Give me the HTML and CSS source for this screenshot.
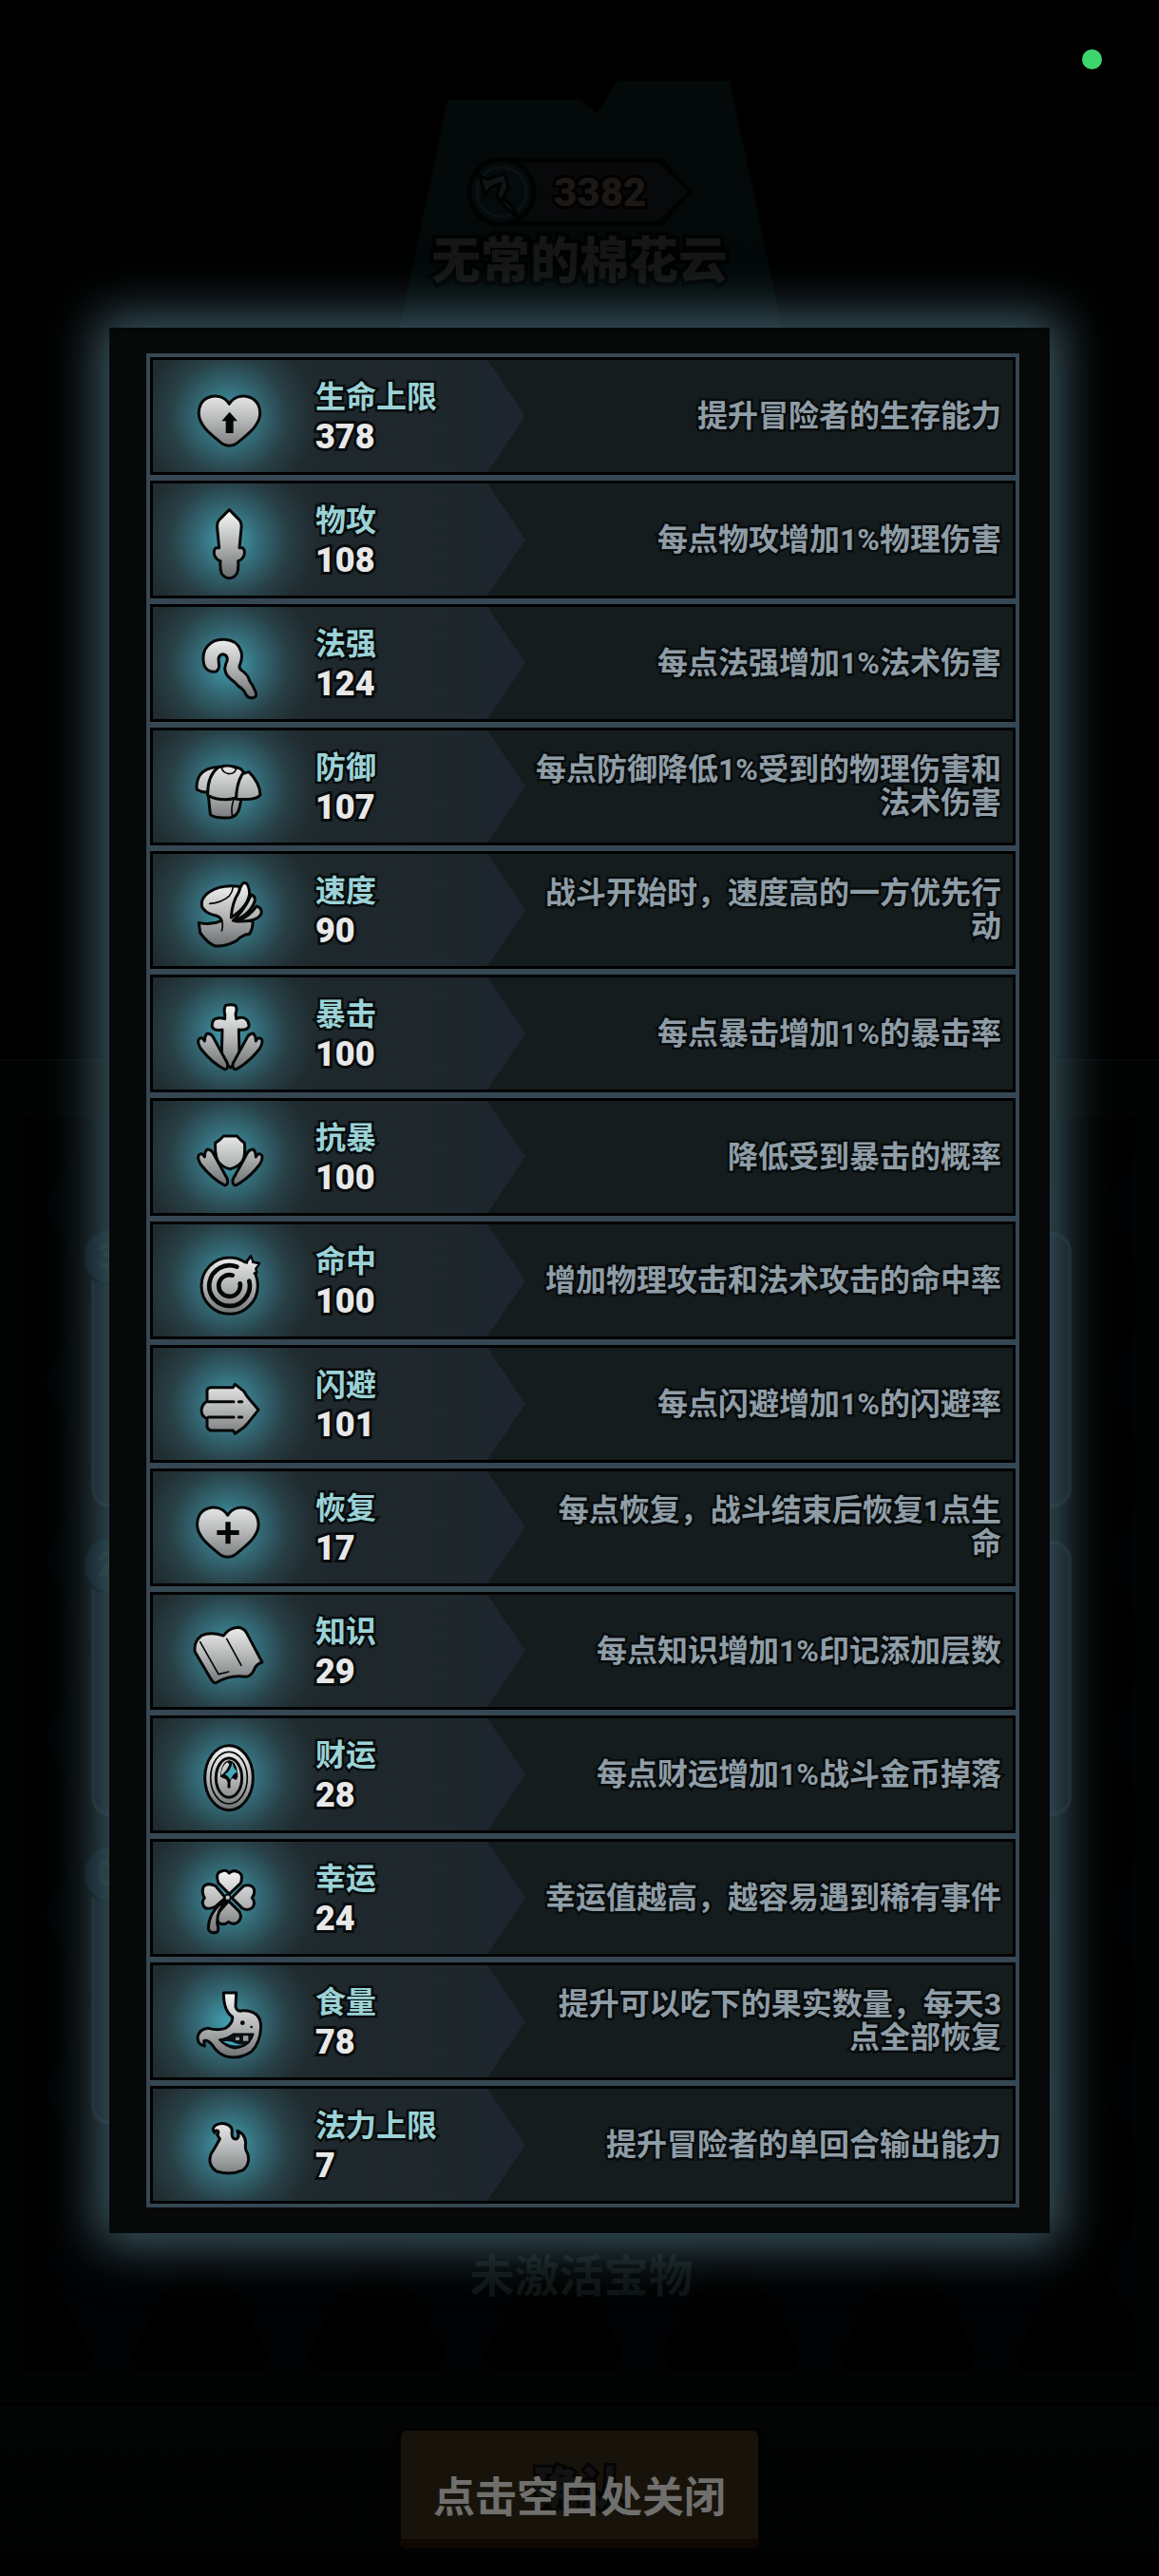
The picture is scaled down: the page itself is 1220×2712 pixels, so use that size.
FILE: index.html
```html
<!DOCTYPE html>
<html lang="zh-CN">
<head>
    <meta charset="UTF-8">
    <meta name="viewport" content="width=device-width, initial-scale=1.0">
    <title>冒险者属性</title>
    <link rel="stylesheet" href="styles.css">
</head>
<body>
    <!-- 图标公用的渐变和形状 -->
    <svg class="defs" width="0" height="0" aria-hidden="true">
        <defs>
            <linearGradient id="metal" gradientUnits="userSpaceOnUse" x1="0" y1="50" x2="0" y2="245">
                <stop offset="0" stop-color="#f2f2f2"/>
                <stop offset="0.5" stop-color="#b4b6b7"/>
                <stop offset="1" stop-color="#6e7072"/>
            </linearGradient>
            <path id="heart" d="M136 94C120 68 92 66 74 72C48 80 38 104 40 128C43 160 68 182 112 218Q136 234 160 218C204 182 230 160 233 128C235 104 224 80 198 72C180 66 152 68 136 94Z"/>
            <path id="leaf" d="M40 150Q48 142 54 150L58 156Q58 140 66 132Q78 132 84 142L130 226Q134 244 122 246Q80 224 46 180Q34 160 40 150Z"/>
        </defs>
    </svg>

    <div class="screen">
        <div class="scene">
            <header class="hero">
                <div class="beam"></div>
                <div class="power">
                    <svg class="power-icon" viewBox="0 0 74 74">
                        <circle cx="37" cy="37" r="34" fill="#050a0b" stroke="#010202" stroke-width="5"/>
                        <circle cx="37" cy="37" r="26" fill="none" stroke="#0b1213" stroke-width="3"/>
                        <path d="M14 20L22 24L40 18L44 32L38 44L46 50L56 66L40 52L32 40L36 28L26 32L20 40Z" fill="#101617" stroke="#010202" stroke-width="3"/>
                    </svg>
                    <span class="power-value">3382</span>
                </div>
                <h1 class="title">无常的棉花云</h1>
            </header>
            <main class="team">
                <div class="board">
                    <div class="cards">
                        <div class="card"><span class="tag">3</span></div>
                        <div class="card"></div>
                        <div class="card"><span class="tag">2</span></div>
                        <div class="card"></div>
                        <div class="card"><span class="tag">0</span></div>
                    </div>
                    <h2 class="relic">未激活宝物</h2>
                </div>
            </main>
            <footer class="footer">
                <button class="confirm" type="button">确认</button>
            </footer>
        </div>

        <div class="modal">
            <div class="status-dot"></div>
            <section class="panel">
                <ul class="stats">
                    <li class="stat">
                        <div class="stat-main">
                            <svg class="icon" viewBox="0 0 270 270">
                                <use href="#heart"/>
                                <path class="ink" d="M137 119L162 148H149V186H125V148H112Z"/>
                            </svg>
                            <div><div class="stat-name">生命上限</div><div class="stat-value">378</div></div>
                        </div>
                        <p class="stat-desc">提升冒险者的生存能力</p>
                    </li>
                    <li class="stat">
                        <div class="stat-main">
                            <svg class="icon" viewBox="0 0 270 270">
                                <path d="M136 38L168 70Q176 80 174 96L168 158L178 158Q188 166 182 184Q176 196 164 200Q166 226 160 240Q150 254 136 254Q122 254 112 240Q106 226 108 200Q96 196 90 184Q84 166 94 158L104 158L98 96Q96 80 104 70Z"/>
                            </svg>
                            <div><div class="stat-name">物攻</div><div class="stat-value">108</div></div>
                        </div>
                        <p class="stat-desc">每点物攻增加1%物理伤害</p>
                    </li>
                    <li class="stat">
                        <div class="stat-main">
                            <svg class="icon" viewBox="0 0 270 270">
                                <path d="M86 160Q62 158 56 136Q48 100 68 78Q90 54 122 58Q160 60 172 92Q180 112 170 136Q164 148 176 156Q196 170 200 188Q214 208 220 226Q224 240 210 242Q196 244 188 230Q180 214 166 206Q154 192 140 182Q124 170 122 150Q124 136 130 122Q130 106 116 104Q102 106 102 122L104 142Q102 160 86 160Z"/>
                            </svg>
                            <div><div class="stat-name">法强</div><div class="stat-value">124</div></div>
                        </div>
                        <p class="stat-desc">每点法强增加1%法术伤害</p>
                    </li>
                    <li class="stat">
                        <div class="stat-main">
                            <svg class="icon" viewBox="0 0 270 270">
                                <path d="M104 70Q60 72 42 98Q30 122 34 142Q50 152 70 150Q72 100 104 70Z"/>
                                <path d="M70 160L76 220Q90 234 140 230Q162 226 168 200L174 172Z"/>
                                <path class="thin" d="M150 174Q140 200 146 228"/>
                                <path d="M100 72Q130 60 172 76L182 88Q160 120 158 168Q110 182 68 160Q66 100 100 72Z"/>
                                <path d="M178 92L198 86Q232 120 234 158Q224 176 158 172Q158 124 178 92Z"/>
                                <path class="thin-fill" d="M112 72Q136 62 158 76Q154 92 134 92Q114 88 112 72Z"/>
                            </svg>
                            <div><div class="stat-name">防御</div><div class="stat-value">107</div></div>
                        </div>
                        <p class="stat-desc">每点防御降低1%受到的物理伤害和<br>法术伤害</p>
                    </li>
                    <li class="stat">
                        <div class="stat-main">
                            <svg class="icon" viewBox="0 0 270 270">
                                <path d="M168 58Q110 50 72 76Q44 96 50 122Q58 140 86 148Q108 152 112 166Q76 182 40 172L44 204Q70 240 92 246Q124 248 158 230Q176 210 200 208Q212 190 210 168L176 160Z"/>
                                <path class="thin" d="M74 112Q110 110 136 88Q146 76 148 60M112 166Q118 180 112 198"/>
                                <path d="M222 120Q242 126 236 146Q222 170 156 168Q196 156 222 120Z"/>
                                <path d="M206 84Q220 88 216 106Q200 150 148 166Q184 132 206 84Z"/>
                                <path d="M184 46Q198 48 200 80Q196 120 142 156Q144 110 166 76Q174 48 184 46Z"/>
                            </svg>
                            <div><div class="stat-name">速度</div><div class="stat-value">90</div></div>
                        </div>
                        <p class="stat-desc">战斗开始时，速度高的一方优先行<br>动</p>
                    </li>
                    <li class="stat">
                        <div class="stat-main">
                            <svg class="icon" viewBox="0 0 270 270">
                                <path d="M124 44Q140 38 156 44Q162 56 156 70L158 86Q176 78 188 86Q200 96 198 110Q192 124 166 120L168 196Q162 224 140 240Q118 224 112 196L114 120Q90 126 82 112Q80 92 92 86Q106 80 122 86L122 70Q118 56 124 44Z"/>
                                <use href="#leaf"/>
                                <use href="#leaf" transform="translate(278 0) scale(-1 1)"/>
                            </svg>
                            <div><div class="stat-name">暴击</div><div class="stat-value">100</div></div>
                        </div>
                        <p class="stat-desc">每点暴击增加1%的暴击率</p>
                    </li>
                    <li class="stat">
                        <div class="stat-main">
                            <svg class="icon" viewBox="0 0 270 270">
                                <use href="#leaf" transform="translate(0 -24)"/>
                                <use href="#leaf" transform="translate(278 -24) scale(-1 1)"/>
                                <path d="M118 66H160L172 78L184 88Q188 130 176 148Q160 166 139 170Q116 166 102 148Q90 130 92 88L106 78Z"/>
                            </svg>
                            <div><div class="stat-name">抗暴</div><div class="stat-value">100</div></div>
                        </div>
                        <p class="stat-desc">降低受到暴击的概率</p>
                    </li>
                    <li class="stat">
                        <div class="stat-main">
                            <svg class="icon" viewBox="0 0 270 270">
                                <path d="M204 56L210 74L230 78L220 94L222 108L190 112L172 92L190 74Z"/>
                                <circle cx="137" cy="149" r="89"/>
                                <path class="ring" d="M199 134A64 64 0 1 1 160 89"/>
                                <path class="ring" d="M170 142A34 34 0 1 1 146 116"/>
                                <path class="flat" d="M204 62L208 78L226 82L216 94L218 104L190 120L160 124L166 98L180 90L178 78L194 80Z"/>
                            </svg>
                            <div><div class="stat-name">命中</div><div class="stat-value">100</div></div>
                        </div>
                        <p class="stat-desc">增加物理攻击和法术攻击的命中率</p>
                    </li>
                    <li class="stat">
                        <div class="stat-main">
                            <svg class="icon" viewBox="0 0 270 270">
                                <path d="M76 80H148L154 70L182 92L192 108L228 151L192 196L180 208L154 226L148 216H78Q64 212 66 196V178Q48 172 48 152Q50 132 66 124V96Q64 82 76 80Z"/>
                                <path class="line" d="M70 125H150M166 125H176M70 174H150M166 174H176"/>
                            </svg>
                            <div><div class="stat-name">闪避</div><div class="stat-value">101</div></div>
                        </div>
                        <p class="stat-desc">每点闪避增加1%的闪避率</p>
                    </li>
                    <li class="stat">
                        <div class="stat-main">
                            <svg class="icon" viewBox="0 0 270 270">
                                <use href="#heart" transform="translate(-5 0)"/>
                                <path class="ink" d="M124 115H140V141H167V156H140V184H124V156H97V141H124Z"/>
                            </svg>
                            <div><div class="stat-name">恢复</div><div class="stat-value">17</div></div>
                        </div>
                        <p class="stat-desc">每点恢复，战斗结束后恢复1点生<br>命</p>
                    </li>
                    <li class="stat">
                        <div class="stat-main">
                            <svg class="icon" viewBox="0 0 270 270">
                                <path d="M48 84Q76 70 118 84Q134 60 164 58Q182 60 190 74L240 168Q222 174 216 188Q206 214 186 214Q140 206 96 232Q88 236 80 224L28 136Q22 104 48 84Z"/>
                                <path class="thin" d="M44 104L102 206M128 94L174 178M102 206L134 198"/>
                            </svg>
                            <div><div class="stat-name">知识</div><div class="stat-value">29</div></div>
                        </div>
                        <p class="stat-desc">每点知识增加1%印记添加层数</p>
                    </li>
                    <li class="stat">
                        <div class="stat-main">
                            <svg class="icon" viewBox="0 0 270 270">
                                <ellipse cx="135" cy="143" rx="76" ry="102"/>
                                <ellipse class="thin" cx="135" cy="143" rx="58" ry="82"/>
                                <ellipse class="line" cx="135" cy="143" rx="41" ry="62"/>
                                <path class="ink" d="M108 140Q110 92 136 88Q162 92 163 140L158 150L144 144L136 164L126 148Z"/>
                                <path class="flat" d="M110 130Q114 102 130 94L136 100Q130 120 112 134Z"/>
                                <path class="spark" d="M146 94Q148 114 162 124Q148 130 138 152Q136 138 122 132Q142 120 146 94Z"/>
                                <path class="line" d="M135 150V172"/>
                            </svg>
                            <div><div class="stat-name">财运</div><div class="stat-value">28</div></div>
                        </div>
                        <p class="stat-desc">每点财运增加1%战斗金币掉落</p>
                    </li>
                    <li class="stat">
                        <div class="stat-main">
                            <svg class="icon" viewBox="0 0 270 270">
                                <path d="M134 142L104 176Q92 200 104 212Q120 220 134 208Q150 220 164 208Q178 196 168 176Z"/>
                                <path d="M136 120L102 86Q90 52 112 48Q126 42 136 54Q148 42 162 50Q182 56 172 86Z"/>
                                <path d="M124 132L92 160Q60 174 54 156Q48 144 58 132Q48 116 54 98Q66 82 92 94Z"/>
                                <path d="M144 132L182 94Q206 88 214 104Q218 120 208 132Q220 146 210 162Q196 176 176 164Z"/>
                                <path d="M124 138Q70 176 70 230Q76 248 98 240Q104 230 98 214Q96 170 128 142Z"/>
                                <circle class="thin-fill" cx="131" cy="131" r="9"/>
                            </svg>
                            <div><div class="stat-name">幸运</div><div class="stat-value">24</div></div>
                        </div>
                        <p class="stat-desc">幸运值越高，越容易遇到稀有事件</p>
                    </li>
                    <li class="stat">
                        <div class="stat-main">
                            <svg class="icon" viewBox="0 0 270 270">
                                <path d="M118 42H158L156 86Q160 104 180 98Q236 98 236 150Q234 200 206 228Q170 252 130 244Q100 236 82 206Q66 188 56 194L58 210Q36 206 36 182Q42 156 70 154Q100 162 124 154Q148 138 146 118Q118 100 118 42Z"/>
                                <path class="mouth" d="M104 190Q130 186 148 172H212Q202 212 154 218Q124 214 104 190Z"/>
                                <path class="spark" d="M116 196Q140 192 156 202Q174 208 184 204Q150 216 116 196Z"/>
                                <path class="flat" d="M180 178H196V194H180ZM156 182H168V192H156Z"/>
                                <circle class="ink" cx="178" cy="137" r="7"/>
                                <circle class="ink" cx="206" cy="150" r="4"/>
                            </svg>
                            <div><div class="stat-name">食量</div><div class="stat-value">78</div></div>
                        </div>
                        <p class="stat-desc">提升可以吃下的果实数量，每天3<br>点全部恢复</p>
                    </li>
                    <li class="stat">
                        <div class="stat-main">
                            <svg class="icon" viewBox="0 0 270 270">
                                <path d="M98 100Q104 94 100 88Q92 84 90 94Q80 84 90 72Q112 58 134 70Q148 80 144 94Q144 116 158 114Q170 108 162 88Q186 98 188 126Q184 146 194 160Q204 190 180 212Q140 230 96 216Q66 196 78 162Q94 136 106 114Q102 106 98 100Z"/>
                            </svg>
                            <div><div class="stat-name">法力上限</div><div class="stat-value">7</div></div>
                        </div>
                        <p class="stat-desc">提升冒险者的单回合输出能力</p>
                    </li>
                </ul>
            </section>
            <button class="close-tip" type="button">点击空白处关闭</button>
        </div>
    </div>
</body>
</html>
```

FILE: styles.css
```css
* {
    margin: 0;
    padding: 0;
    box-sizing: border-box;
}

body {
    font-family: Roboto, "Noto Sans CJK SC", sans-serif;
    background: #000;
    color: #e8e8e8;
}

button {
    font-family: inherit;
    border: none;
    cursor: pointer;
}

.defs {
    position: absolute;
}

/* 场景和弹窗叠在同一格里 */
.screen {
    display: grid;
    grid-template-columns: 100%;
    min-height: 100vh;
}

.scene,
.modal {
    grid-area: 1 / 1;
    display: flex;
    flex-direction: column;
}

/* 背景场景 */
.hero {
    position: relative;
    height: 1115px;
    padding-top: 165px;
    display: flex;
    flex-direction: column;
    align-items: center;
}

.beam {
    position: absolute;
    top: 85px;
    left: 50%;
    width: 560px;
    height: 500px;
    margin-left: -262px;
    background: linear-gradient(#040909, #03090a 60%, #000);
    clip-path: polygon(22% 4%, 47% 4%, 50% 7%, 54% 0, 75% 0, 94% 100%, 4% 100%);
}

.power {
    position: relative;
    display: flex;
    align-items: center;
    width: 238px;
    height: 74px;
}

.power::before,
.power::after {
    content: "";
    position: absolute;
    inset: 1px 0 1px 37px;
    background: #010202;
    clip-path: polygon(0 0, 84% 0, 100% 50%, 84% 100%, 0 100%);
}

.power::after {
    inset: 6px 5px 6px 37px;
    background: #08090b;
}

.power-icon {
    position: relative;
    z-index: 1;
    width: 74px;
    height: 74px;
}

.power-value {
    position: relative;
    z-index: 1;
    margin-left: 18px;
    font-size: 42px;
    font-weight: 900;
    color: #1c1815;
    -webkit-text-stroke: 6px #010101;
    paint-order: stroke fill;
}

.title {
    position: relative;
    font-size: 52px;
    line-height: 74px;
    font-weight: 900;
    color: #151615;
    -webkit-text-stroke: 8px #010202;
    paint-order: stroke fill;
}

.team {
    flex: 1;
    padding: 60px 25px 34px;
    background: #020403;
    border-top: 2px solid #04080a;
}

.board {
    height: 100%;
    padding: 120px 67px 0 71px;
    background-color: #010203;
    background-image:
        linear-gradient(60deg, #000 25%, transparent 25%, transparent 75%, #000 75%),
        linear-gradient(-60deg, #000 25%, transparent 25%, transparent 75%, #000 75%);
    background-size: 186px 186px;
}

.cards {
    display: grid;
    grid-template-columns: 1fr 1fr;
    grid-auto-rows: 290px;
    gap: 35px;
}

.card {
    position: relative;
    background: #060a0c;
    border: 4px solid #0f1517;
    border-radius: 20px;
}

/* 右下角空着一格 */
.tag {
    position: absolute;
    top: -8px;
    left: -14px;
    width: 52px;
    height: 60px;
    line-height: 54px;
    text-align: center;
    font-size: 36px;
    font-weight: 900;
    color: #12191b;
    background: #051214;
    border: 3px solid #010405;
    border-radius: 50%;
}

.relic {
    margin-top: 130px;
    font-size: 47px;
    line-height: 60px;
    font-weight: 700;
    text-align: center;
    color: #0e1414;
}

.footer {
    height: 183px;
    padding-top: 22px;
    border-top: 4px solid #000;
    background: linear-gradient(#030504, #010202 80%, #000);
    text-align: center;
}

.confirm {
    width: 384px;
    height: 128px;
    font-size: 48px;
    font-weight: 900;
    color: #121212;
    -webkit-text-stroke: 6px #040403;
    paint-order: stroke fill;
    background: #18130a;
    border: 4px solid #020202;
    border-bottom: 10px solid #0f0703;
    border-radius: 10px;
}

/* 属性弹窗 */
.modal {
    position: relative;
    padding: 345px 115px 0;
    align-items: center;
}

.status-dot {
    position: absolute;
    top: 52px;
    right: 60px;
    width: 21px;
    height: 21px;
    border-radius: 50%;
    background: #3dd66c;
}

.panel {
    width: 100%;
    padding: 27px 32px 27px 39px;
    background: #070808;
    box-shadow: 0 0 50px 12px rgba(78, 114, 127, 0.8), inset 0 0 5px #000c0e;
}

.stats {
    list-style: none;
    display: flex;
    flex-direction: column;
    gap: 6px;
    padding: 4px;
    background: #364754;
}

.stat {
    display: grid;
    grid-template-columns: 392px 1fr;
    height: 124px;
    border: 3px solid #000;
    background: #151c1e;
}

.stat-main {
    display: flex;
    align-items: center;
    padding-top: 2px;
    background:
        radial-gradient(circle at 80px 60px, rgba(72, 174, 194, 0.9), rgba(66, 150, 168, 0.6) 32px, rgba(58, 110, 122, 0.32) 62px, rgba(44, 70, 76, 0.1) 90px, transparent 115px),
        linear-gradient(90deg, #1f2a2d, #1e272c 80%, #1d2530);
    clip-path: polygon(0 0, calc(100% - 40px) 0, 100% 50%, calc(100% - 40px) 100%, 0 100%);
}

.icon {
    width: 90px;
    height: 90px;
    margin: 0 46px 0 35px;
    fill: url(#metal);
    stroke: #050707;
    stroke-width: 9px;
    stroke-linejoin: round;
    stroke-linecap: round;
}

.icon .ink {
    fill: #050707;
    stroke: none;
}

.icon .line {
    fill: none;
}

.icon .thin {
    fill: none;
    stroke-width: 5px;
}

.icon .thin-fill {
    stroke-width: 5px;
}

.icon .ring {
    fill: none;
    stroke-width: 14px;
}

.icon .flat {
    stroke: none;
}

.icon .spark {
    fill: #46a9c0;
    stroke: none;
}

.icon .mouth {
    fill: #0a1215;
    stroke-width: 5px;
}

.stat-name {
    font-size: 32px;
    line-height: 42px;
    font-weight: 700;
    color: #9bd2d6;
    -webkit-text-stroke: 5px #080c0d;
    paint-order: stroke fill;
}

.stat-value {
    font-size: 36px;
    line-height: 42px;
    font-weight: 900;
    color: #e8e8e8;
    -webkit-text-stroke: 6px #080c0d;
    paint-order: stroke fill;
}

.stat-desc {
    align-self: center;
    padding-right: 12px;
    font-size: 32px;
    line-height: 35px;
    font-weight: 700;
    text-align: right;
    white-space: nowrap;
    color: #8f9da6;
    -webkit-text-stroke: 5px #080c0d;
    paint-order: stroke fill;
}

.close-tip {
    margin-top: 254px;
    font-size: 44px;
    line-height: 50px;
    font-weight: 700;
    white-space: nowrap;
    color: #6f6f6d;
    background: none;
}
```
